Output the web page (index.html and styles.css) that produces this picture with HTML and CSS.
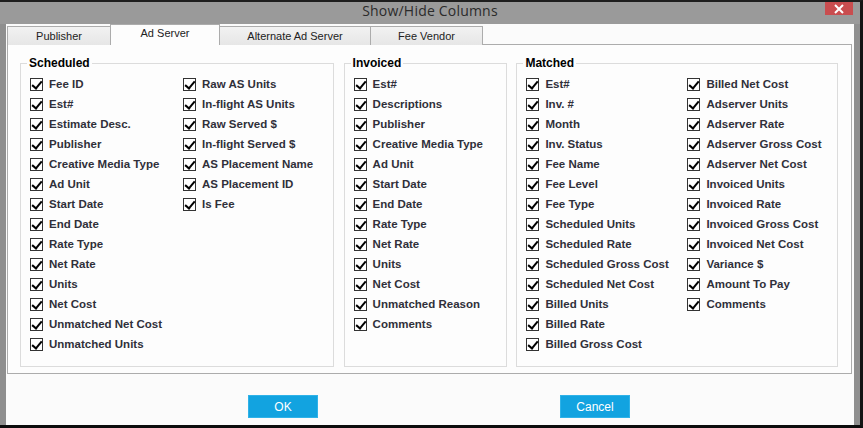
FILE: index.html
```html
<html>
  <head>
    <link rel="stylesheet" href="styles.css">
  </head>
  <body>
    <div class="window">
      <div class="titlebar">
        <span class="title">Show/Hide Columns</span>
        <span class="close">
          <svg width="12" height="10" viewBox="0 0 12 10"><path d="M2 1 L10 9 M10 1 L2 9" stroke="#fff" stroke-width="2"/></svg>
        </span>
      </div>
      <div class="client">
        <div class="tabs">
          <div class="tab t1">Publisher</div>
          <div class="tab t2 sel">Ad Server</div>
          <div class="tab t3">Alternate Ad Server</div>
          <div class="tab t4">Fee Vendor</div>
        </div>
        <div class="panel">
          <fieldset class="grp sched">
            <legend>Scheduled</legend>
            <div class="cols">
              <div class="col">
                <div class="row"><span class="cb"></span>Fee ID</div>
                <div class="row"><span class="cb"></span>Est#</div>
                <div class="row"><span class="cb"></span>Estimate Desc.</div>
                <div class="row"><span class="cb"></span>Publisher</div>
                <div class="row"><span class="cb"></span>Creative Media Type</div>
                <div class="row"><span class="cb"></span>Ad Unit</div>
                <div class="row"><span class="cb"></span>Start Date</div>
                <div class="row"><span class="cb"></span>End Date</div>
                <div class="row"><span class="cb"></span>Rate Type</div>
                <div class="row"><span class="cb"></span>Net Rate</div>
                <div class="row"><span class="cb"></span>Units</div>
                <div class="row"><span class="cb"></span>Net Cost</div>
                <div class="row"><span class="cb"></span>Unmatched Net Cost</div>
                <div class="row"><span class="cb"></span>Unmatched Units</div>
              </div>
              <div class="col">
                <div class="row"><span class="cb"></span>Raw AS Units</div>
                <div class="row"><span class="cb"></span>In-flight AS Units</div>
                <div class="row"><span class="cb"></span>Raw Served $</div>
                <div class="row"><span class="cb"></span>In-flight Served $</div>
                <div class="row"><span class="cb"></span>AS Placement Name</div>
                <div class="row"><span class="cb"></span>AS Placement ID</div>
                <div class="row"><span class="cb"></span>Is Fee</div>
              </div>
            </div>
          </fieldset>
          <fieldset class="grp inv">
            <legend>Invoiced</legend>
            <div class="cols">
              <div class="col">
                <div class="row"><span class="cb"></span>Est#</div>
                <div class="row"><span class="cb"></span>Descriptions</div>
                <div class="row"><span class="cb"></span>Publisher</div>
                <div class="row"><span class="cb"></span>Creative Media Type</div>
                <div class="row"><span class="cb"></span>Ad Unit</div>
                <div class="row"><span class="cb"></span>Start Date</div>
                <div class="row"><span class="cb"></span>End Date</div>
                <div class="row"><span class="cb"></span>Rate Type</div>
                <div class="row"><span class="cb"></span>Net Rate</div>
                <div class="row"><span class="cb"></span>Units</div>
                <div class="row"><span class="cb"></span>Net Cost</div>
                <div class="row"><span class="cb"></span>Unmatched Reason</div>
                <div class="row"><span class="cb"></span>Comments</div>
              </div>
            </div>
          </fieldset>
          <fieldset class="grp match">
            <legend>Matched</legend>
            <div class="cols">
              <div class="col">
                <div class="row"><span class="cb"></span>Est#</div>
                <div class="row"><span class="cb"></span>Inv. #</div>
                <div class="row"><span class="cb"></span>Month</div>
                <div class="row"><span class="cb"></span>Inv. Status</div>
                <div class="row"><span class="cb"></span>Fee Name</div>
                <div class="row"><span class="cb"></span>Fee Level</div>
                <div class="row"><span class="cb"></span>Fee Type</div>
                <div class="row"><span class="cb"></span>Scheduled Units</div>
                <div class="row"><span class="cb"></span>Scheduled Rate</div>
                <div class="row"><span class="cb"></span>Scheduled Gross Cost</div>
                <div class="row"><span class="cb"></span>Scheduled Net Cost</div>
                <div class="row"><span class="cb"></span>Billed Units</div>
                <div class="row"><span class="cb"></span>Billed Rate</div>
                <div class="row"><span class="cb"></span>Billed Gross Cost</div>
              </div>
              <div class="col">
                <div class="row"><span class="cb"></span>Billed Net Cost</div>
                <div class="row"><span class="cb"></span>Adserver Units</div>
                <div class="row"><span class="cb"></span>Adserver Rate</div>
                <div class="row"><span class="cb"></span>Adserver Gross Cost</div>
                <div class="row"><span class="cb"></span>Adserver Net Cost</div>
                <div class="row"><span class="cb"></span>Invoiced Units</div>
                <div class="row"><span class="cb"></span>Invoiced Rate</div>
                <div class="row"><span class="cb"></span>Invoiced Gross Cost</div>
                <div class="row"><span class="cb"></span>Invoiced Net Cost</div>
                <div class="row"><span class="cb"></span>Variance $</div>
                <div class="row"><span class="cb"></span>Amount To Pay</div>
                <div class="row"><span class="cb"></span>Comments</div>
              </div>
            </div>
          </fieldset>
        </div>
        <div class="buttons">
          <button class="btn">OK</button>
          <button class="btn">Cancel</button>
        </div>
      </div>
    </div>
  </body>
</html>
```
FILE: styles.css
```css
*{
  margin: 0;
  padding: 0;
  box-sizing: border-box;
}
body{
  background: #000;
  font-family: "Liberation Sans", Arial, sans-serif;
}
.window{
  width: 863px;
  height: 428px;
  background: #8f8f8f;
  border-top: 2px solid #1e1e1e;
  border-right: 3px solid #141414;
  border-bottom: 3px solid #0c0c0c;
  display: flex;
  flex-direction: column;
}
.titlebar{
  position: relative;
  height: 22px;
  background: #9a9a9a;
  text-align: center;
}
.title{
  font-family: "Open Sans", "Liberation Sans", sans-serif;
  font-size: 14px;
  line-height: 17px;
  color: #2b2b2b;
  letter-spacing: 0.2px;
}
.close{
  position: absolute;
  right: 7px;
  top: 0;
  width: 28px;
  height: 13px;
  background: #c94d4f;
  display: flex;
  align-items: center;
  justify-content: center;
}
.client{
  flex: 1;
  margin: 0 6px;
  background: #fbfbfb;
  display: flex;
  flex-direction: column;
}
.tabs{
  display: flex;
  align-items: flex-end;
  height: 21px;
  margin-left: 1px;
  margin-bottom: -1px;
  position: relative;
  z-index: 1;
}
.tab{
  height: 19px;
  border: 1px solid #acacac;
  border-bottom: none;
  background: linear-gradient(#f2f2f2, #e6e6e6);
  font-size: 11px;
  color: #222;
  text-align: center;
  line-height: 19px;
  margin-right: -1px;
}
.tab.sel{
  height: 21px;
  background: #fdfdfd;
  line-height: 17px;
}
.t1{ width: 104px; }
.t2{ width: 110px; }
.t3{ width: 152px; }
.t4{ width: 113px; }
.panel{
  height: 330px;
  margin: 0 2px 0 1px;
  border: 1px solid #acacac;
  background: #fdfdfd;
  display: flex;
  padding: 11px 13px 6px 12px;
}
.grp{
  border: 1px solid #dcdcdc;
  padding: 4px 9px 0 9px;
  min-width: 0;
}
.grp legend{
  font-size: 12px;
  font-weight: bold;
  color: #000;
  line-height: 14px;
  padding: 0 2px;
  margin-left: -3px;
}
.sched{ width: 314px; }
.inv{ width: 164px; margin-left: 10px; }
.match{ width: 322px; margin-left: 9px; }
.cols{
  display: flex;
}
.sched .col:first-child{ width: 153px; }
.match .col:first-child{ width: 161px; }
.row{
  height: 20px;
  display: flex;
  align-items: center;
  gap: 6px;
  font-size: 11.5px;
  font-weight: bold;
  color: #30303a;
  white-space: nowrap;
}
.cb{
  position: relative;
  width: 13px;
  height: 13px;
  border: 1px solid #333;
  background: #fff;
  flex: none;
}
.cb::after{
  content: "";
  position: absolute;
  left: 3px;
  top: 0px;
  width: 4px;
  height: 8px;
  border-right: 2px solid #000;
  border-bottom: 2px solid #000;
  transform: rotate(40deg);
}
.buttons{
  display: flex;
  gap: 242px;
  padding: 21px 0 0 242px;
}
.btn{
  width: 70px;
  height: 23px;
  background: #12a3e0;
  border: 1px solid #2fb2e8;
  color: #fff;
  font-family: "Liberation Sans", Arial, sans-serif;
  font-size: 12px;
}
```
